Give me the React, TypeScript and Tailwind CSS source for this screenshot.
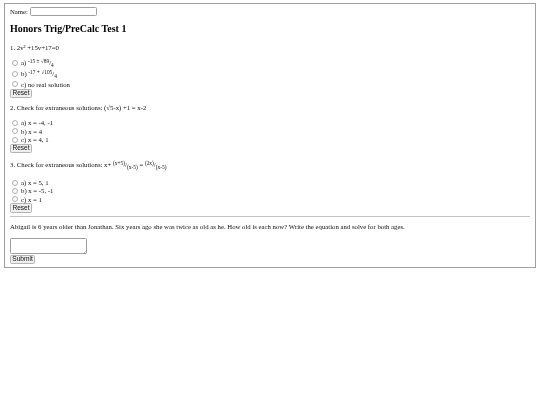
const Radio = () => (
  <input
    type="radio"
    className="appearance-none block w-[6px] h-[6px] rounded-full border-[0.7px] border-[#b0b0b0] bg-white ml-[2px] mr-[3px] shrink-0"
  />
)

const ResetButton = ({ label = "Reset", w = "w-[22px]", h = "h-[9.5px]" }: { label?: string; w?: string; h?: string }) => (
  <button
    type="button"
    className={`flex items-center justify-center ${w} ${h} p-0 pb-[1px] text-[6.6px] leading-[6px] font-['Liberation_Sans',sans-serif] text-[#111] bg-[#efefef] border-[0.7px] border-[#b4b4b4] rounded-[1.5px]`}
  >
    {label}
  </button>
)

const Frac = ({ top, bottom }: { top: string; bottom: string }) => (
  <span>
    <span className="text-[5.4px] relative top-[-2px]">{top}</span>
    <span>/</span>
    <span className="text-[5.4px] relative top-[2px]">{bottom}</span>
  </span>
)

const Option = ({ children, h = "h-[8.3px]" }: { children: React.ReactNode; h?: string }) => (
  <div className={`flex items-center ${h}`}>
    <Radio />
    <span>{children}</span>
  </div>
)

export default function App() {
  return (
    <div className="w-[540px] h-[405px] bg-white pt-[3px] px-[4px] font-['Liberation_Serif',serif] text-[6.75px] leading-[9px] text-[#111] [will-change:transform]">
      <div className="h-[265px] border border-[#a0a0a0] pl-[5px] pr-[5px]">
        <div className="flex items-center h-[9px] mt-[3px]">
          <span>Name:</span>
          <input className="ml-[2px] w-[67px] h-[9px] border-[0.7px] border-[#a0a0a0] rounded-[1.5px] bg-white" />
        </div>

        <h1 className="mt-[7px] text-[10px] leading-[12px] font-bold text-black">Honors Trig/PreCalc Test 1</h1>

        <p className="mt-[7.5px]">1. 2v² +15v+17=0</p>
        <div className="mt-[5.5px]">
          <Option h="h-[11px]">a) <Frac top="-15 ± √89" bottom="4" /></Option>
          <Option h="h-[11.5px]">b) <Frac top="-17 + √105" bottom="4" /></Option>
          <Option h="h-[9px]">c) no real solution</Option>
        </div>
        <ResetButton />

        <p className="mt-[5px]">2. Check for extraneous solutions: (√5-x) +1 = x-2</p>
        <div className="mt-[6.8px]">
          <Option>a) x = -4, -1</Option>
          <Option>b) x = 4</Option>
          <Option>c) x = 4, 1</Option>
        </div>
        <ResetButton />

        <p className="mt-[7.3px]">
          3. Check for extraneous solutions: x+ <Frac top="(x+5)" bottom="(x-5)" /> = <Frac top="(2x)" bottom="(x-5)" />
        </p>
        <div className="mt-[8px]">
          <Option>a) x = 5, 1</Option>
          <Option>b) x = -5, -1</Option>
          <Option>c) x = 1</Option>
        </div>
        <ResetButton />

        <hr className="mt-[3px] border-t border-[#c4c4c4]" />

        <p className="mt-[5.5px]">Abigail is 6 years older than Jonathan. Six years ago she was twice as old as he. How old is each now? Write the equation and solve for both ages.</p>

        <div className="mt-[6.5px] relative w-[77px] h-[16px]">
          <textarea className="block w-full h-full resize-none border-[0.7px] border-[#a0a0a0] rounded-[1.5px] bg-white" />
          <svg className="absolute right-0 bottom-0" width="5" height="5" viewBox="0 0 5 5">
            <path d="M1 5L5 1M3 5L5 3" stroke="#888" strokeWidth="0.5" />
          </svg>
        </div>
        <div className="mt-[1px]">
          <ResetButton label="Submit" w="w-[25px]" h="h-[9px]" />
        </div>
      </div>
    </div>
  )
}
